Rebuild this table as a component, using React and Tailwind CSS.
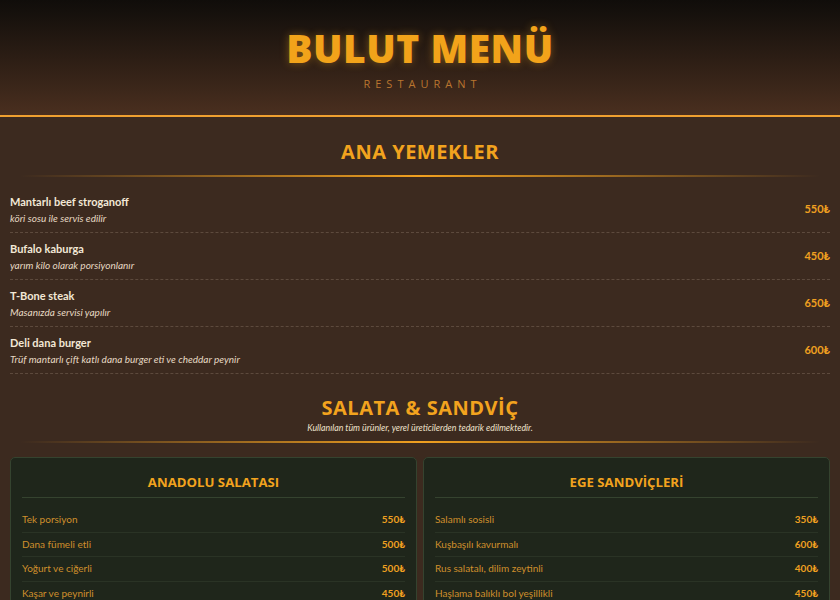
import React from "react";

const mains = [
  { name: "Mantarlı beef stroganoff", desc: "köri sosu ile servis edilir", price: "550₺" },
  { name: "Bufalo kaburga", desc: "yarım kilo olarak porsiyonlanır", price: "450₺" },
  { name: "T-Bone steak", desc: "Masanızda servisi yapılır", price: "650₺" },
  { name: "Deli dana burger", desc: "Trüf mantarlı çift katlı dana burger eti ve cheddar peynir", price: "600₺" },
];

const cards = [
  {
    title: "ANADOLU SALATASI",
    items: [
      ["Tek porsiyon", "550₺"],
      ["Dana fümeli etli", "500₺"],
      ["Yoğurt ve ciğerli", "500₺"],
      ["Kaşar ve peynirli", "450₺"],
    ],
  },
  {
    title: "EGE SANDVİÇLERİ",
    items: [
      ["Salamlı sosisli", "350₺"],
      ["Kuşbaşılı kavurmalı", "600₺"],
      ["Rus salatalı, dilim zeytinli", "400₺"],
      ["Haşlama balıklı bol yeşillikli", "450₺"],
    ],
  },
];

function SectionTitle({ children }) {
  return (
    <h2 className="text-center font-['Open_Sans',sans-serif] text-[20px] leading-[28px] font-bold tracking-[0.5px] text-[#f2a31e]">
      {children}
    </h2>
  );
}

function GlowLine() {
  return (
    <div className="h-[2px] mx-[10px] bg-gradient-to-r from-transparent via-[#f0a020] to-transparent" />
  );
}

export default function App() {
  return (
    <div className="min-h-screen bg-[#3c2a1f] font-['Lato',sans-serif]">
      {/* header */}
      <header className="h-[117px] flex flex-col items-center bg-gradient-to-b from-[#100d0a] to-[#4a2f1f] border-b-2 border-[#f0a030]">
        <h1 className="mt-[26px] font-['Open_Sans',sans-serif] text-[39px] leading-[44px] font-extrabold tracking-[0.5px] text-[#f2a31a] [text-shadow:0_0_8px_rgba(245,166,35,0.4)]">
          BULUT MENÜ
        </h1>
        <p className="mt-[6px] font-['Open_Sans',sans-serif] text-[11px] leading-[16px] tracking-[5px] pl-[5px] text-[#b9752f]">
          RESTAURANT
        </p>
      </header>

      <main className="px-[10px] pb-10">
        {/* ana yemekler */}
        <section className="pt-[21px]">
          <SectionTitle>ANA YEMEKLER</SectionTitle>
          <div className="mt-[9px]">
            <GlowLine />
          </div>
          <ul className="mt-[9px]">
            {mains.map((m) => (
              <li
                key={m.name}
                className="h-[47px] flex items-center justify-between border-b border-dashed border-[#5d4a3d]"
              >
                <div className="flex flex-col">
                  <span className="text-[11px] leading-[15px] font-bold text-[#f3e8d6]">{m.name}</span>
                  <span className="mt-[2px] text-[10px] leading-[14px] italic text-[#e6d9c3]">{m.desc}</span>
                </div>
                <span className="text-[11px] font-bold text-[#f0a020]">{m.price}</span>
              </li>
            ))}
          </ul>
        </section>

        {/* salata & sandviç */}
        <section className="pt-[20px]">
          <SectionTitle>SALATA &amp; SANDVİÇ</SectionTitle>
          <p className="text-center text-[8.8px] leading-[12px] italic text-[#eee2cc]">
            Kullanılan tüm ürünler, yerel üreticilerden tedarik edilmektedir.
          </p>
          <div className="mt-[7px]">
            <GlowLine />
          </div>
          <div className="mt-[14px] grid grid-cols-2 gap-[6px]">
            {cards.map((c) => (
              <div
                key={c.title}
                className="rounded-[5px] border border-[#35432f] bg-[#1f261b] px-[11px] pt-[14px] pb-2"
              >
                <h3 className="text-center font-['Open_Sans',sans-serif] text-[13.2px] leading-[20px] font-bold text-[#f2a31e] pb-[5px] border-b border-[#35432f]">
                  {c.title}
                </h3>
                <ul className="mt-[10px]">
                  {c.items.map(([n, p]) => (
                    <li
                      key={n}
                      className="h-[24.5px] flex items-center justify-between border-b border-[#2a3325] text-[10px]"
                    >
                      <span className="text-[#cf8f2c]">{n}</span>
                      <span className="font-bold text-[#f0a020]">{p}</span>
                    </li>
                  ))}
                </ul>
              </div>
            ))}
          </div>
        </section>
      </main>
    </div>
  );
}
